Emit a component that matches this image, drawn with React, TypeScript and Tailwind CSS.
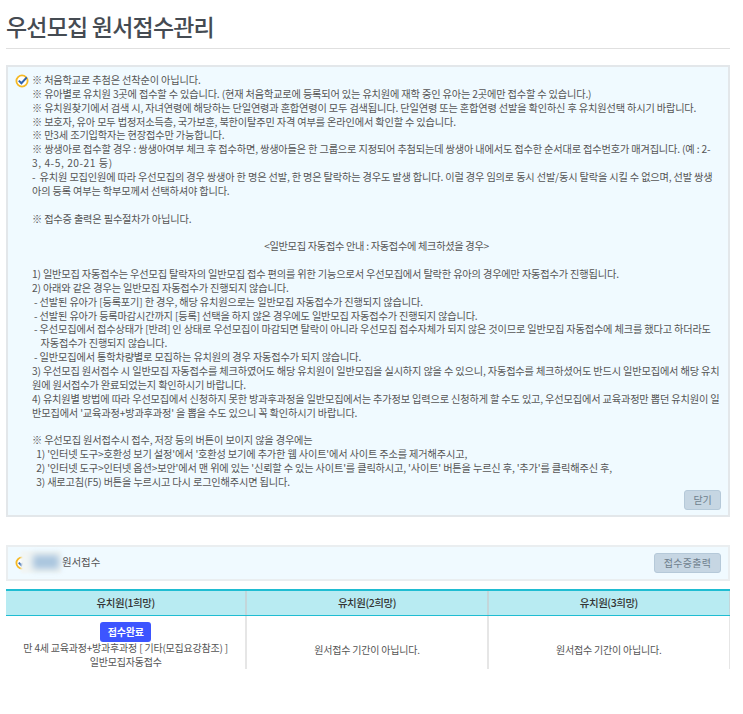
import React from 'react';

const noticeTop = [
  '※ 처음학교로 추첨은 선착순이 아닙니다.',
  '※ 유아별로 유치원 3곳에 접수할 수 있습니다. (현재 처음학교로에 등록되어 있는 유치원에 재학 중인 유아는 2곳에만 접수할 수 있습니다.)',
  '※ 유치원찾기에서 검색 시, 자녀연령에 해당하는 단일연령과 혼합연령이 모두 검색됩니다. 단일연령 또는 혼합연령 선발을 확인하신 후 유치원선택 하시기 바랍니다.',
  '※ 보호자, 유아 모두 법정저소득층, 국가보훈, 북한이탈주민 자격 여부를 온라인에서 확인할 수 있습니다.',
  '※ 만3세 조기입학자는 현장접수만 가능합니다.',
  '※ 쌍생아로 접수할 경우 : 쌍생아여부 체크 후 접수하면, 쌍생아들은 한 그룹으로 지정되어 추첨되는데 쌍생아 내에서도 접수한 순서대로 접수번호가 매겨집니다. (예 : 2-',
];

const noticeTwin = [
  '-  유치원 모집인원에 따라 우선모집의 경우 쌍생아 한 명은 선발, 한 명은 탈락하는 경우도 발생 합니다. 이럴 경우 임의로 동시 선발/동시 탈락을 시킬 수 없으며, 선발 쌍생',
  '아의 등록 여부는 학부모께서 선택하셔야 합니다.',
  '',
  '※ 접수증 출력은 필수절차가 아닙니다.',
  '',
];

const noticeBottom = [
  '',
  '1) 일반모집 자동접수는 우선모집 탈락자의 일반모집 접수 편의를 위한 기능으로서 우선모집에서 탈락한 유아의 경우에만 자동접수가 진행됩니다.',
  '2) 아래와 같은 경우는 일반모집 자동접수가 진행되지 않습니다.',
  ' - 선발된 유아가 [등록포기] 한 경우, 해당 유치원으로는 일반모집 자동접수가 진행되지 않습니다.',
  ' - 선발된 유아가 등록마감시간까지 [등록] 선택을 하지 않은 경우에도 일반모집 자동접수가 진행되지 않습니다.',
  ' - 우선모집에서 접수상태가 [반려] 인 상태로 우선모집이 마감되면 탈락이 아니라 우선모집 접수자체가 되지 않은 것이므로 일반모집 자동접수에 체크를 했다고 하더라도',
  '    자동접수가 진행되지 않습니다.',
  ' - 일반모집에서 통학차량별로 모집하는 유치원의 경우 자동접수가 되지 않습니다.',
  '3) 우선모집 원서접수 시 일반모집 자동접수를 체크하였어도 해당 유치원이 일반모집을 실시하지 않을 수 있으니, 자동접수를 체크하셨어도 반드시 일반모집에서 해당 유치',
  '원에 원서접수가 완료되었는지 확인하시기 바랍니다.',
  "4) 유치원별 방법에 따라 우선모집에서 신청하지 못한 방과후과정을 일반모집에서는 추가정보 입력으로 신청하게 할 수도 있고, 우선모집에서 교육과정만 뽑던 유치원이 일",
  "반모집에서 '교육과정+방과후과정' 을 뽑을 수도 있으니 꼭 확인하시기 바랍니다.",
  '',
  '※ 우선모집 원서접수시 접수, 저장 등의 버튼이 보이지 않을 경우에는',
  "  1) '인터넷 도구>호환성 보기 설정'에서 '호환성 보기에 추가한 웹 사이트'에서 사이트 주소를 제거해주시고,",
  "  2) '인터넷 도구>인터넷 옵션>보안'에서 맨 위에 있는 '신뢰할 수 있는 사이트'를 클릭하시고, '사이트' 버튼을 누르신 후, '추가'를 클릭해주신 후,",
  '  3) 새로고침(F5) 버튼을 누르시고 다시 로그인해주시면 됩니다.',
];

function CheckIcon() {
  return (
    <svg width="14" height="14" viewBox="0 0 14 14" className="shrink-0">
      <circle cx="7" cy="7" r="5.6" fill="#fff" stroke="#f5b925" strokeWidth="1.8" />
      <path d="M3.8 6.6 L6.4 9.2 L11.8 3.4" fill="none" stroke="#2f62ad" strokeWidth="2" />
    </svg>
  );
}

function Line({ text }: { text: string }) {
  return <div className="h-[13.86px] whitespace-pre">{text}</div>;
}

export default function App() {
  return (
    <div className="w-[743px] h-[714px] bg-white overflow-hidden pl-[6px] pr-[13px] font-['Noto_Sans_CJK_KR','Noto_Sans',sans-serif] text-[10.2px] leading-[13.86px] text-[#555555] tracking-[-0.16px]">
      <h1 className="h-[49px] pt-[8px] border-b border-[#e0e0e0] text-[23px] leading-[36px] font-medium text-[#454b52] tracking-[-0.8px]">
        우선모집 원서접수관리
      </h1>

      <div className="mt-[16px] h-[452px] border-2 border-[#e3e7ea] bg-[#f0faff] pl-[7px] pr-[7px] pt-[6px]">
        <div className="flex gap-[3px]">
          <div className="pt-[1px]">
            <CheckIcon />
          </div>
          <div className="min-w-0 flex-1">
            {noticeTop.map((t, i) => (
              <Line key={i} text={t} />
            ))}
            <div className="h-[13.86px] whitespace-pre tracking-[0.55px]">3, 4-5, 20-21 등)</div>
            {noticeTwin.map((t, i) => (
              <Line key={i} text={t} />
            ))}
            <div className="h-[13.86px] text-center tracking-[-0.3px]">{'<일반모집 자동접수 안내 : 자동접수에 체크하셨을 경우>'}</div>
            {noticeBottom.map((t, i) => (
              <Line key={i} text={t} />
            ))}
          </div>
        </div>
        <div className="flex justify-end mt-[1px]">
          <button className="w-[37px] h-[20px] rounded-[3px] border border-[#b5c9d9] bg-[#c6d6e3] text-[#6f7f8d] text-[10px] leading-[18px]">
            닫기
          </button>
        </div>
      </div>

      <div className="relative mt-[28px] h-[36px] border-2 border-[#eaeef0] bg-[#f0faff] flex items-center justify-between pl-[7px] pr-[7px]">
        <div className="flex items-center gap-[33px]">
          <CheckIcon />
          <span className="mb-[3px] text-[10.5px] tracking-[-0.1px]">원서접수</span>
        </div>
        <div className="absolute left-[13px] top-[4px] w-[40px] h-[22px] bg-[#f1f5f4] blur-[1px] flex items-center justify-center">
          <div className="ml-[10px] w-[26px] h-[14px] bg-[#a9c5de] blur-[3px]" />
        </div>
        <button className="w-[67px] h-[20px] rounded-[3px] border border-[#b5c9d9] bg-[#c6d6e3] text-[#6f7f8d] text-[10px] leading-[18px] tracking-[0.3px]">
          접수증출력
        </button>
      </div>

      <div className="mt-[8px] border-t-2 border-[#1fbdd2]">
        <div className="grid grid-cols-3 h-[25px] bg-[#b8ebf2] border-b border-[#1fbdd2] text-[10.5px] leading-[24px] font-medium text-[#333333] text-center tracking-[-0.45px]">
          <div className="border-r-2 border-[#c3d6da]">유치원(1희망)</div>
          <div className="border-r-2 border-[#c3d6da]">유치원(2희망)</div>
          <div className="border-r border-[#c3d6da]">유치원(3희망)</div>
        </div>
        <div className="grid grid-cols-3 h-[52px] text-center text-[10px] tracking-[-0.2px]">
          <div className="border-r-2 border-[#e6e6e6] flex flex-col items-center pt-[6px]">
            <span className="w-[51px] h-[20px] rounded-[3px] bg-[#3d55ff] text-white text-[10px] leading-[19px] font-bold">
              접수완료
            </span>
            <span className="mt-[-1px]">만 4세 교육과정+방과후과정 [ 기타(모집요강참조) ]</span>
            <span>일반모집자동접수</span>
          </div>
          <div className="border-r-2 border-[#e6e6e6] pt-[27px]">원서접수 기간이 아닙니다.</div>
          <div className="border-r border-[#e6e6e6] pt-[27px]">원서접수 기간이 아닙니다.</div>
        </div>
      </div>
    </div>
  );
}
